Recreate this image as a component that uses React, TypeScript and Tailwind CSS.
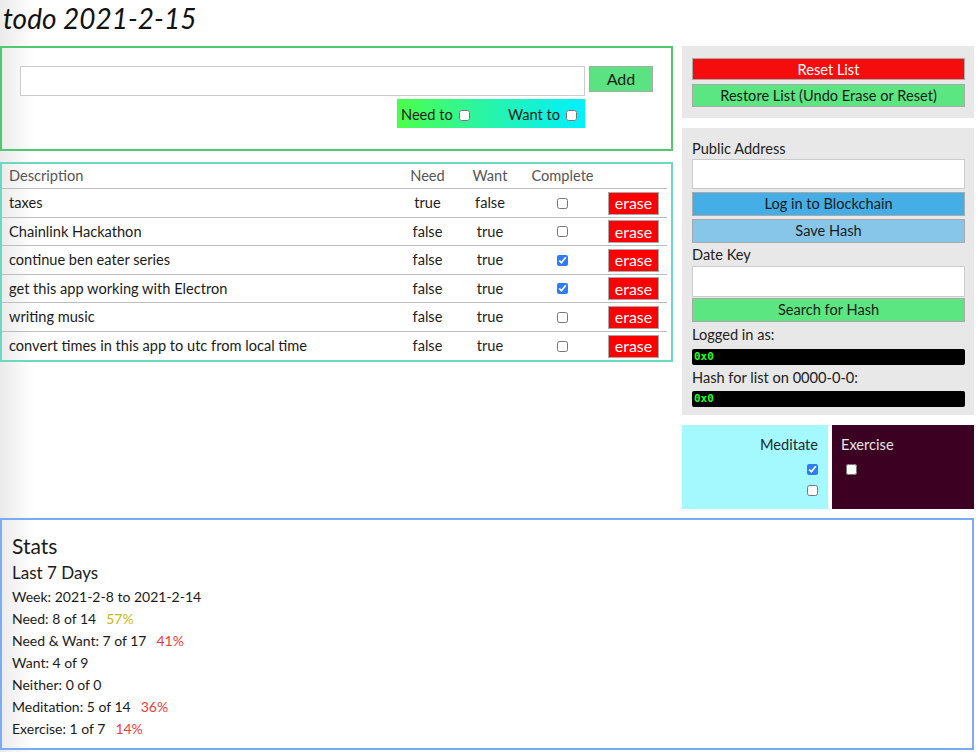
import React from "react";

const rows = [
  { d: "taxes", need: "true", want: "false", done: false },
  { d: "Chainlink Hackathon", need: "false", want: "true", done: false },
  { d: "continue ben eater series", need: "false", want: "true", done: true },
  { d: "get this app working with Electron", need: "false", want: "true", done: true },
  { d: "writing music", need: "false", want: "true", done: false },
  { d: "convert times in this app to utc from local time", need: "false", want: "true", done: false },
];

function Box({ checked, light }: { checked?: boolean; light?: boolean }) {
  return (
    <input
      type="checkbox"
      defaultChecked={checked}
      className={"m-0 h-[11px] w-[11px] accent-[#2f7df6] " + (light ? "bg-white" : "")}
    />
  );
}

export default function App() {
  return (
    <div
      className="min-h-[752px] w-[980px] bg-[linear-gradient(to_right,#ebebeb,#ffffff_34px)] text-[14.6px] text-[#222]"
      style={{ fontFamily: "Lato, 'Open Sans', sans-serif" }}
    >
      <h1 className="flex h-[46px] items-start pl-[3px] pt-[2px] text-[28px] italic leading-[32px] text-[#111]">
        todo 2021-2-15
      </h1>
      <div className="flex w-[974px] gap-[9px]">
        {/* left column */}
        <div className="flex w-[673px] flex-col gap-[11px]">
          <div className="h-[105px] border-2 border-[#4fc86f] pl-[18px] pt-[18px]">
            <div className="flex items-start">
              <input className="h-[30px] w-[565px] border border-[#cccccc] bg-white" />
              <button className="ml-[4px] h-[26px] w-[64px] border border-[#a9a9a9] bg-[#5ce381] text-[16px] text-[#1b1b1b]">
                Add
              </button>
            </div>
            <div className="ml-[377px] mt-[3px] flex h-[29px] w-[188px] items-center justify-between bg-[linear-gradient(to_right,#4cff4a,#2ff59a_40%,#00f0ff)] px-[4px] pt-[3px] text-[#1b1b1b]">
              <span className="flex items-center gap-[6px]">
                Need to
                <span className="mt-[2px] flex">
                  <Box />
                </span>
              </span>
              <span className="flex items-center gap-[6px] pr-[4px]">
                Want to
                <span className="mt-[2px] flex">
                  <Box />
                </span>
              </span>
            </div>
          </div>
          <div className="h-[200px] border-2 border-[#6bd9c0] pr-[4px]">
            <div className="grid h-[25px] grid-cols-[393px_65px_60px_85px_1fr] items-center border-b border-[#bdbdbd] text-[#555]">
              <span className="pl-[7px]">Description</span>
              <span className="text-center">Need</span>
              <span className="text-center">Want</span>
              <span className="text-center">Complete</span>
              <span />
            </div>
            {rows.map((r, i) => (
              <div
                key={i}
                className={
                  "grid h-[28.5px] grid-cols-[393px_65px_60px_85px_1fr] items-center pt-[1px] " +
                  (i < rows.length - 1 ? "border-b border-[#bdbdbd]" : "")
                }
              >
                <span className="pl-[7px] text-[#1b1b1b]">{r.d}</span>
                <span className="text-center">{r.need}</span>
                <span className="text-center">{r.want}</span>
                <span className="flex justify-center">
                  <Box checked={r.done} />
                </span>
                <span className="pl-[3px]">
                  <button className="flex h-[23px] w-[51px] items-center justify-center border border-[#a9a9a9] bg-[#ff0000] text-[16px] text-white">
                    erase
                  </button>
                </span>
              </div>
            ))}
          </div>
        </div>
        {/* right column */}
        <div className="flex w-[292px] flex-col">
          <div className="flex flex-col gap-[4px] bg-[#e8e8e8] pb-[11px] pl-[10px] pr-[9px] pt-[12px]">
            <button className="h-[22px] border border-[#a9a9a9] bg-[#f50d0d] text-white">Reset List</button>
            <button className="h-[23px] border border-[#a9a9a9] bg-[#5ce681] text-[#1b1b1b]">
              Restore List (Undo Erase or Reset)
            </button>
          </div>
          <div className="mt-[10px] flex flex-col bg-[#e8e8e8] pb-[8px] pl-[10px] pr-[9px] pt-[10px]">
            <label className="h-[21px] leading-[21px]">Public Address</label>
            <input className="h-[30px] border border-[#cccccc] bg-white" />
            <button className="mt-[3px] h-[24px] border border-[#a9a9a9] bg-[#46aee6] text-[#1b1b1b]">
              Log in to Blockchain
            </button>
            <button className="mt-[3px] h-[24px] border border-[#a9a9a9] bg-[#87c6e8] text-[#1b1b1b]">
              Save Hash
            </button>
            <label className="h-[23px] leading-[23px]">Date Key</label>
            <input className="h-[31px] border border-[#cccccc] bg-white" />
            <button className="mt-[1px] h-[24px] border border-[#a9a9a9] bg-[#5ce681] text-[#1b1b1b]">
              Search for Hash
            </button>
            <label className="mt-[2px] h-[22px] leading-[22px]">Logged in as:</label>
            <div
              className="mt-[3px] flex h-[16px] items-center rounded-[2px] bg-black pl-[2px] text-[11px] font-bold text-[#22ff22]"
              style={{ fontFamily: "'DejaVu Sans Mono', monospace" }}
            >
              0x0
            </div>
            <label className="mt-[2px] h-[22px] leading-[22px]">Hash for list on 0000-0-0:</label>
            <div
              className="mt-[2px] flex h-[16px] items-center rounded-[2px] bg-black pl-[2px] text-[11px] font-bold text-[#22ff22]"
              style={{ fontFamily: "'DejaVu Sans Mono', monospace" }}
            >
              0x0
            </div>
          </div>
          <div className="mt-[10px] flex h-[84px] gap-[4px]">
            <div className="flex w-[146px] flex-col items-end bg-[#a3f9ff] pr-[10px] pt-[9px]">
              <span className="leading-[22px] text-[#1b2b2b]">Meditate</span>
              <span className="mt-[8px] flex">
                <Box checked />
              </span>
              <span className="mt-[10px] flex">
                <Box />
              </span>
            </div>
            <div className="flex w-[142px] flex-col items-start bg-[#3b0022] pl-[9px] pt-[9px]">
              <span className="leading-[22px] text-[#e6e6e6]">Exercise</span>
              <span className="ml-[5px] mt-[8px] flex">
                <Box light />
              </span>
            </div>
          </div>
        </div>
      </div>
      <div className="mt-[9px] h-[232px] w-[974px] border-2 border-[#7aabf5] pl-[10px] pt-[13px] text-[#1b1b1b]">
        <div className="h-[26px] text-[21px] leading-[26px]">Stats</div>
        <div className="h-[27px] pt-[1px] text-[17px] leading-[25px]">Last 7 Days</div>
        <div className="text-[14px] leading-[22px]">
          <div>Week: 2021-2-8 to 2021-2-14</div>
          <div>
            Need: 8 of 14<span className="ml-[10px] text-[#c8b81c]">57%</span>
          </div>
          <div>
            Need &amp; Want: 7 of 17<span className="ml-[10px] text-[#f23a3a]">41%</span>
          </div>
          <div>Want: 4 of 9</div>
          <div>Neither: 0 of 0</div>
          <div>
            Meditation: 5 of 14<span className="ml-[10px] text-[#f23a3a]">36%</span>
          </div>
          <div>
            Exercise: 1 of 7<span className="ml-[10px] text-[#f23a3a]">14%</span>
          </div>
        </div>
      </div>
    </div>
  );
}
